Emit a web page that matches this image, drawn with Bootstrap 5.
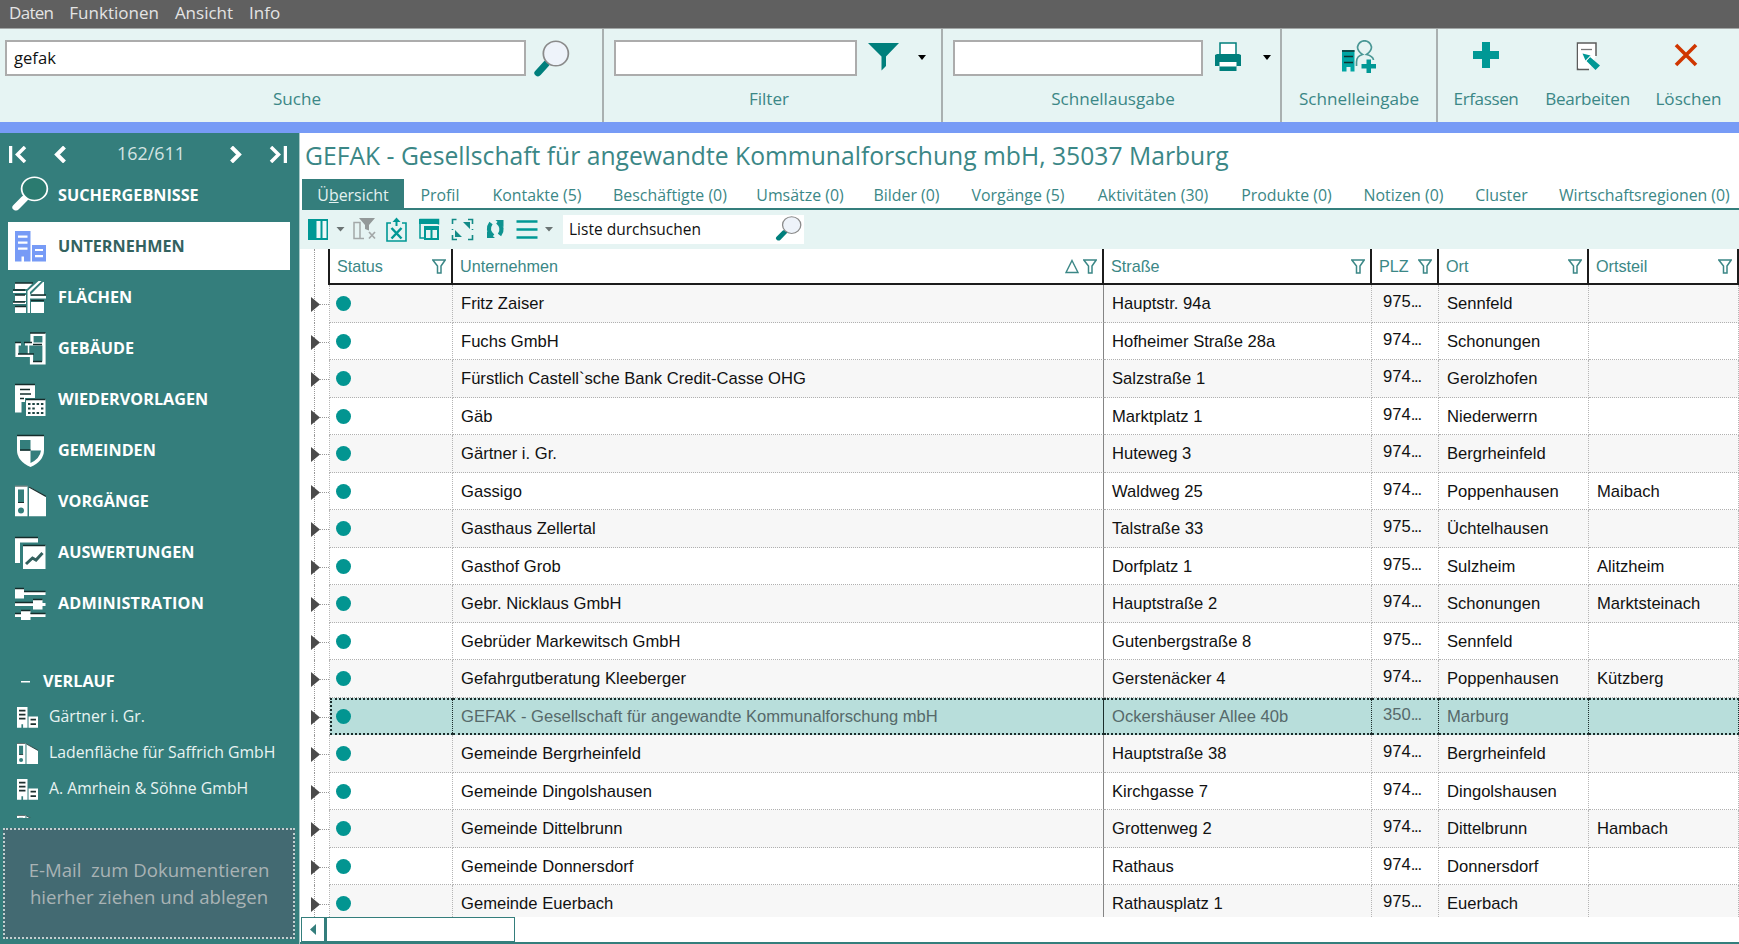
<!DOCTYPE html>
<html lang="de">
<head>
<meta charset="utf-8">
<meta name="viewport" content="width=device-width, initial-scale=1">
<title>GEFAK</title>
<link href="https://cdn.jsdelivr.net/npm/bootstrap@5.3.0/dist/css/bootstrap.min.css" rel="stylesheet">
<style>
:root{--teal:#347e7c;--ink:#3b8786;--mint:#e6f4f3;--acc:#009895;--blue:#779bf6}
body{font-family:"Open Sans","Noto Sans",sans-serif;height:944px;overflow:hidden;background:#fff;line-height:1}
svg{display:block;flex:none}
.menubar{height:29px;background:#606060;border-bottom:1px solid #a2a6a6;color:#e4e4e4;font-size:17px;padding-left:9px;gap:16px}
.menubar span{padding-bottom:3px}
.menubar span:first-child{letter-spacing:-.7px}
.ribbon{height:93px;background:var(--mint);color:var(--ink);font-size:17.1px}
.ribbon-group{padding-top:11px;border-right:2px solid #a9b0b0}
.ribbon-group.last{border:0}
.ribbon-line{height:37px}
.ribbon-label{margin-top:11px;text-align:center;line-height:22px;white-space:nowrap}
.field{height:36px;background:#fff;border:2px solid #acacac;border-radius:0;color:#111;font-size:16.6px;padding:0 0 0 7px;line-height:31px}
.stripe{height:11px;background:var(--blue)}
.side{width:300px;height:811px;background:var(--teal);color:#fff;border-right:1px solid #a9c9c8}
.pager{height:42px;font-size:17.9px;color:#d4e4e3;padding:0 12px 0 9px}
.side-item{height:48px;margin:0 9px 3px 8px;padding-left:5px;font-weight:700;font-size:16.2px}
.side-item svg{margin-right:12px}
.side-item.active{background:#fff;color:#33625f;--hole:#fff}
.side-item.active svg{color:var(--blue)}
.history{height:119px;overflow:hidden}
.history>div{height:36px;padding-left:17px;font-size:15.8px;color:#e8f3f2;white-space:nowrap}
.history svg{margin-right:11px}
.drop{height:111px;margin:10px 4px 0 3px;background:#436a72;border:2px dotted #c3cfd0;color:#a9b3b5;font-size:18.6px;line-height:26.5px;text-align:center;white-space:pre}
.main{width:1439px;height:811px}
.title-line{height:46px;font-size:24.7px;color:var(--ink);padding:0 0 0 5px;white-space:nowrap}
.tabs{margin-left:2px;height:31px;display:grid;grid-template-columns:102px 72px 122px 144px 116px 97px 126px 144px 123px 111px 85px 195px;border-bottom:2px solid var(--teal);font-size:15.9px;color:var(--ink);overflow:hidden}
.tabs>div{text-align:center;line-height:32px;white-space:nowrap}
.tabs>.active{background:var(--teal);color:#e3f1f0}
.tabs>:last-child{text-align:left;padding-left:15px;letter-spacing:-.05px}
.tools{height:39px;background:var(--mint);color:var(--acc);padding-left:6px}
.listsearch{width:241px;height:29px;background:#fff;color:#111;font-size:15.5px;padding-left:6px}
.grid{height:668px;overflow:hidden;font-family:"Liberation Sans",Arial,sans-serif;font-size:16.6px;color:#111;background:#fff}
.grid-row{display:grid;grid-template-columns:30px 123px 651px 268px 67px 150px 150px;height:37.5px}
.grid-row.head{height:36px;color:var(--ink);font-size:16.2px}
.head>div{border-right:2px solid #1c1c1c;border-bottom:2px solid #1c1c1c;display:flex;align-items:center;justify-content:space-between;padding:1px 5px 0 7px}
.head>.tree{border-bottom:0}
.cell{border-right:1px dotted #b5b5b5;border-bottom:1px dotted #b0b0b0;padding:0 0 0 8px;line-height:37px;white-space:nowrap;overflow:hidden}
.odd .cell{background:#f7f7f7}
.cell.solid{border-right:1px solid #858585}
.cell.plz{line-height:33px;padding-left:11px}
.tree{position:relative;border-right:1px dotted #b5b5b5}
.tree::before{content:"";position:absolute;left:14px;top:0;bottom:0;border-left:1px dotted #999}
.data .tree::after{content:"";position:absolute;left:18px;right:0;top:19px;border-top:1px dotted #999}
.tree svg{position:absolute;left:10px;top:12px;z-index:1}
.dot{width:15px;height:15px;border-radius:50%;background:#029591;margin:11px 0 0 -2px}
.picked .cell{background:#b8dedb;color:#56696a;border-top:2px dotted #1a2c2b;border-bottom:2px dotted #1a2c2b;border-right-color:#1a2c2b;line-height:33px}
.picked .cell.plz{line-height:29px}
.picked .cell.first{border-left:2px dotted #1a2c2b;padding-left:6px}
.picked .dot{margin-top:9px}
.hscroll{height:27px;border-bottom:2px solid var(--teal);padding-left:1px}
.hscroll .arrow{width:24px;height:25px;border:1px solid var(--teal)}
.hscroll .thumb{width:190px;height:25px;border:1px solid var(--teal);border-left-width:2px}
</style>
</head>
<body>
<svg width="0" height="0" class="position-absolute">
<defs>
<symbol id="i-firm" viewBox="0 0 31 31"><path fill="currentColor" d="M0 0h15.500v30.500H9v-5H6.500v5H0zM17 14h14v16.500H17z"/><path style="fill:var(--hole,#347e7c)" d="M3 4.500h9.500v2.200H3zM3 10.500h9.500v2.200H3zM3 16.500h9.500v2.200H3zM20 18h8v2H20zM20 24h8v2.200H20z"/></symbol>
<symbol id="i-firm-dark" viewBox="0 0 31 31"><path fill="#fff" d="M0 0h15.500v30.500H9v-5H6.500v5H0zM17 14h14v16.500H17z"/><path fill="#1d302f" d="M3 4h9.500v2.500H3zM3 10h9.500v2.500H3zM3 16h9.500v2.500H3zM20 17.500h8V20H20zM20 24h8v2.500H20z"/></symbol>
<symbol id="i-file" viewBox="0 0 31 31"><path fill="#fff" d="M0 0h12.500v31H0zM14 1l17 10v20H14z"/><path fill="#347e7c" d="M3 4h6v13H3z"/><circle cx="6" cy="25" r="3" fill="#347e7c"/><path d="M0 .5h12.500M14 1.500l17 9.500M3 17h6" stroke="#1d302f" stroke-width="1.200"/></symbol>
<symbol id="i-lens" viewBox="0 0 34 40"><path d="M12 24L4.500 33" stroke="var(--h,#007f7c)" stroke-width="6.500" stroke-linecap="round"/><ellipse cx="21" cy="13.500" rx="11.500" ry="12.300" fill="var(--g,#eef3fa)" stroke="var(--r,#8a8a8a)" stroke-width="1.600"/></symbol>
<symbol id="i-fun" viewBox="0 0 14 15"><path d="M.8 1h12.400L9 7v7H5.500V7z" fill="none" stroke="#3b8786" stroke-width="1.500"/></symbol>
</defs>
</svg>

<nav class="menubar d-flex align-items-center"><span>Daten</span><span>Funktionen</span><span>Ansicht</span><span>Info</span></nav>

<header class="ribbon d-flex">
  <div class="ribbon-group" style="width:604px">
    <div class="ribbon-line d-flex" style="padding-left:5px"><div class="field" style="width:521px">gefak</div>
      <svg width="37" height="40" viewBox="0 0 34 40" preserveAspectRatio="none" style="margin-left:7px"><use href="#i-lens"/></svg></div>
    <div class="ribbon-label" style="padding-right:8px">Suche</div>
  </div>
  <div class="ribbon-group" style="width:339px">
    <div class="ribbon-line d-flex" style="padding-left:10px"><div class="field" style="width:243px"></div>
      <svg width="31" height="28" viewBox="0 0 31 28" style="margin:3px 0 0 11px"><path fill="#007f7c" d="M0 0h31L18 13.500V23l-4.500 4.500v-14z"/></svg>
      <svg width="9" height="6" viewBox="0 0 9 6" style="margin:15px 0 0 19px"><path d="M0 0h8L4 5z"/></svg></div>
    <div class="ribbon-label" style="padding-right:7px">Filter</div>
  </div>
  <div class="ribbon-group" style="width:339px">
    <div class="ribbon-line d-flex" style="padding-left:10px"><div class="field" style="width:250px"></div>
      <svg width="26" height="29" viewBox="0 0 26 29" style="margin:2px 0 0 12px"><path d="M5 1h16v12H5z" fill="#fff" stroke="#007f7c" stroke-width="1.500"/><path fill="#007f7c" d="M0 13l2-1h22l2 1v11h-4.500v5h-17v-5H0z"/><path fill="#fff" d="M4.500 20h17v4.500h-17z"/></svg>
      <svg width="9" height="6" viewBox="0 0 9 6" style="margin:15px 0 0 22px"><path d="M0 0h8L4 5z"/></svg></div>
    <div class="ribbon-label" style="padding-left:3px">Schnellausgabe</div>
  </div>
  <div class="ribbon-group" style="width:156px">
    <div class="ribbon-line d-flex justify-content-center">
      <svg width="34" height="34" viewBox="0 0 34 34"><path fill="#00a5a3" d="M0 10h12.500v21.500H8.500V27H4.500v4.500H0z"/><path d="M0 11h12.500M2 16.500h9M2 22.500h9" stroke="#12312f" stroke-width="1.300"/><path d="M14.500 26v-4q0-6 6-7.500Q15.500 11 15.500 7 17 .8 22.500 .8T29.500 7Q29.500 11 24.500 14.500 31 16 31.500 20" fill="none" stroke="#4a9795" stroke-width="1.700"/><path fill="#009895" d="M24.500 19.500h4.500v4.500h5v4.500h-5v4.500h-4.500v-4.500h-5V24h5z"/></svg></div>
    <div class="ribbon-label">Schnelleingabe</div>
  </div>
  <div class="ribbon-group last" style="width:96px">
    <div class="ribbon-line d-flex justify-content-center"><svg width="26" height="26" viewBox="0 0 26 26" style="margin-top:2px"><path fill="#009895" d="M9 0h8v9h9v8h-9v9H9v-9H0V9h9z"/></svg></div>
    <div class="ribbon-label" style="letter-spacing:-.4px">Erfassen</div>
  </div>
  <div class="ribbon-group last" style="width:107px">
    <div class="ribbon-line d-flex justify-content-center"><svg width="25" height="29" viewBox="0 0 25 29" style="margin:2px 0 0 2px"><path d="M13 27.500H1.500V1h18.500v13" fill="#fff" stroke="#5c5c5c" stroke-width="1.500"/><path fill="#fff" d="M2 2h17v12l-5 12H2z"/><path d="M5 7.500h11" stroke="#777" stroke-width="1.300"/><path fill="#009895" d="M6.500 11.500l8 2-5 5zM14 15l10 8.500-4.500 4.500-9-9z"/><path d="M15 13.500l-5 5.500" stroke="#e6f4f3"/></svg></div>
    <div class="ribbon-label" style="letter-spacing:-.3px">Bearbeiten</div>
  </div>
  <div class="ribbon-group last" style="width:95px">
    <div class="ribbon-line d-flex justify-content-center"><svg width="24" height="24" viewBox="0 0 24 24" style="margin:3px 6px 0 0"><path d="M2 2l20 20M22 2L2 22" stroke="#cf3600" stroke-width="3.600"/></svg></div>
    <div class="ribbon-label">Löschen</div>
  </div>
</header>
<div class="stripe"></div>

<div class="d-flex">
<aside class="side">
  <div class="pager d-flex align-items-center">
    <svg width="18" height="17" viewBox="0 0 18 17"><path d="M1.500 0v17M16 1L8.500 8.500 16 16" fill="none" stroke="#fff" stroke-width="3.500"/></svg>
    <svg width="12" height="17" viewBox="0 0 12 17" style="margin-left:27px"><path d="M10.500 1L3 8.500l7.500 7.500" fill="none" stroke="#fff" stroke-width="4"/></svg>
    <span style="margin:0 0 1px 51px">162/611</span>
    <svg width="12" height="17" viewBox="0 0 12 17" class="ms-auto"><path d="M1.500 1L9 8.500 1.500 16" fill="none" stroke="#fff" stroke-width="4"/></svg>
    <svg width="18" height="17" viewBox="0 0 18 17" style="margin-left:27px"><path d="M16.500 0v17M2 1l7.500 7.500L2 16" fill="none" stroke="#fff" stroke-width="3.500"/></svg>
  </div>
  <div style="margin-top:-4px">
  <div class="side-item d-flex align-items-center" style="padding-left:3px;--h:#fff;--r:#fff;--g:#2b7b70"><svg width="38" height="38" viewBox="0 0 34 40" preserveAspectRatio="none" style="margin-right:9px"><use href="#i-lens"/></svg>SUCHERGEBNISSE</div>
  <div class="side-item active d-flex align-items-center" style="padding-left:7px"><svg width="31" height="31"><use href="#i-firm"/></svg>UNTERNEHMEN</div>
  <div class="side-item d-flex align-items-center"><svg width="33" height="33" viewBox="0 0 33 33"><path fill="#fff" d="M2 2h18l-6 6H2zM23 8l7-7h1v13H17zM0 10h13v2H0zM2 14h11v6H2zM0 21h13v2H0zM2 26h11v6H2zM18 21h13v11H18zM14.500 10l11-10h3L17 11v21h-2.500z"/><path fill="#fff" d="M16 14.500h17v3H16z"/><path d="M2 2h18M0 9h12M18 14h15M18 19.500h13M2 14h10M0 21h12M2 25.500h11" stroke="#152c2b" stroke-width="1.300"/></svg>FLÄCHEN</div>
  <div class="side-item d-flex align-items-center"><svg width="33" height="33" viewBox="0 0 33 33"><path d="M8 12H4v11.500h14.500V31H31V2.500H19V12h-7M19 12h12" fill="none" stroke="#fff" stroke-width="3.200"/><path d="M15.500 12v11" stroke="#fff" stroke-width="1.500"/><path d="M17 1h15.500M2 10.500h6M11 10.500h8M20 12.500h9M5 22h16M20 29.500h9" stroke="#152c2b" stroke-width="1.300"/></svg>GEBÄUDE</div>
  <div class="side-item d-flex align-items-center"><svg width="33" height="33" viewBox="0 0 33 33"><path fill="#fff" d="M2 1h20v14H12v4h-3.500v10.500H2zM13 16h19.500v17H13z"/><path d="M2 1.500h20M7 6.500h10M7 11h11M7 15.500h4M13 16.500h19.500" stroke="#152c2b" stroke-width="1.700"/><path d="M15 21h16M15 25.500h16M15 30h16" stroke="#1d4341" stroke-width="2" stroke-dasharray="2.500 1.800"/><path fill="#fff" d="M23 24h5v3h-5z"/></svg>WIEDERVORLAGEN</div>
  <div class="side-item d-flex align-items-center"><svg width="33" height="33" viewBox="0 0 33 33"><path fill="#fff" d="M4 2h27v14q0 11-13.500 17Q4 27 4 16z"/><path fill="#347e7c" d="M7 6h10.500v10.500H7zM17.500 16.500H28q-1 8-10.500 12.500z"/><path d="M4 1.500h27M7 16h10.500" stroke="#152c2b" stroke-width="1.300"/></svg>GEMEINDEN</div>
  <div class="side-item d-flex align-items-center" style="padding-left:7px"><svg width="31" height="32" viewBox="0 0 31 31"><use href="#i-file"/></svg>VORGÄNGE</div>
  <div class="side-item d-flex align-items-center"><svg width="33" height="33" viewBox="0 0 33 33"><path fill="#fff" d="M2 1h23v5.500H7V27H2zM10 9h22.500v24H10z"/><path d="M2 1.500h23M10 9.500h22.500" stroke="#152c2b" stroke-width="1.500"/><path d="M13 28l6.500-6 3.500 2 6.500-7" fill="none" stroke="#34605e" stroke-width="3"/></svg>AUSWERTUNGEN</div>
  <div class="side-item d-flex align-items-center" style="letter-spacing:.2px"><svg width="33" height="33" viewBox="0 0 33 33"><path fill="#fff" d="M2 5h30.500v3H2zM2 16h30.500v3H2zM2 27h30.500v3H2zM2 1.500h9v10H2zM20 12.500h9.500v10H20zM8 23.500h9.500v10H8z"/><path d="M2 1.500h9M11 4.500h21.500M2 15.500h18M20 12.500h9.500M2 26.500h6M8 23.500h9.500M17.500 26.500h15" stroke="#152c2b" stroke-width="1.300"/></svg>ADMINISTRATION</div>
  </div>
  <div class="d-flex align-items-center fw-bold" style="height:35px;margin-top:37px;padding-left:21px;font-size:16.2px"><svg width="9" height="2" style="margin-right:13px"><path fill="#fff" d="M0 0h9v1.500H0z"/></svg>VERLAUF</div>
  <div class="history">
    <div class="d-flex align-items-center"><svg width="21" height="21"><use href="#i-firm-dark"/></svg>Gärtner i. Gr.</div>
    <div class="d-flex align-items-center"><svg width="21" height="21"><use href="#i-file"/></svg>Ladenfläche für Saffrich GmbH</div>
    <div class="d-flex align-items-center"><svg width="21" height="21"><use href="#i-firm-dark"/></svg>A. Amrhein &amp; Söhne GmbH</div>
    <div class="d-flex align-items-center"><svg width="21" height="21"><use href="#i-file"/></svg>Gärtner Sauer Gießen</div>
  </div>
  <div class="drop d-flex align-items-center justify-content-center">E-Mail  zum Dokumentieren
hierher ziehen und ablegen</div>
</aside>

<main class="main">
  <div class="title-line d-flex align-items-center">GEFAK - Gesellschaft für angewandte Kommunalforschung mbH, 35037 Marburg</div>
  <div class="tabs"><div class="active">Ü<u>b</u>ersicht</div><div>Profil</div><div>Kontakte (5)</div><div>Beschäftigte (0)</div><div>Umsätze (0)</div><div>Bilder (0)</div><div>Vorgänge (5)</div><div>Aktivitäten (30)</div><div>Produkte (0)</div><div>Notizen (0)</div><div>Cluster</div><div>Wirtschaftsregionen (0)</div></div>
  <div class="tools d-flex align-items-center">
    <svg width="258" height="30" viewBox="306 215 258 30">
      <path fill="#009895" d="M308 219h20v21h-20z"/><path fill="#eef8f8" d="M316.500 221h4v17h-4zM322.500 221h4v17h-4z"/>
      <path fill="#6b7474" d="M336.500 227h8l-4 4.500zM545 227h8l-4 4.500z"/>
      <path d="M354 238.500v-16h6v16zM364 238.500h-4v-16" fill="none" stroke="#a3a8a8" stroke-width="1.500"/><path fill="#939999" d="M359 218h16l-6 7v5.500l-4-1.500v-4z"/><path d="M369 232l6 6.500m0-6.500l-6 6.500" stroke="#a3a8a8" stroke-width="1.700"/>
      <path d="M391 223h-4v18h19v-18h-4" fill="none" stroke="#009895" stroke-width="1.600"/><path d="M396.500 226v-6" stroke="#009895" stroke-width="2"/><path d="M391.500 228l10 10.500m0-10.500l-10 10.500" stroke="#009895" stroke-width="2.500"/><path fill="#009895" d="M392.500 222l4-4.500 4 4.500z"/>
      <path fill="#009895" d="M419 219h20v5h-20zM424 226h15v14h-15z"/><path d="M420 222v16h4M419.500 219.500h19v5" fill="none" stroke="#009895" stroke-width="1.500"/><path fill="#e6f4f3" d="M426 230h4.500v8H426zM432.500 230h4.500v8h-4.500z"/>
      <path d="M452.500 224v-4.500h4M468 219.500h4.500v4.500M472.500 235v4.500H468M457 239.500h-4.500V235M452.500 229v1M472.500 229v1" fill="none" stroke="#128a87" stroke-width="1.600"/><path fill="#128a87" d="M463 222h7v7zM455 230v7h7z"/>
      <path d="M493 236q-7-6-2-13M497.500 222q7 6 2 13" fill="none" stroke="#0d9390" stroke-width="4"/><path fill="#0d9390" d="M487 231v7h8zM503.500 227v-7h-8z"/>
      <path d="M516.500 221.500h21M516.500 229.500h21M516.500 237.500h21" stroke="#009895" stroke-width="2.700"/>
    </svg>
    <div class="listsearch d-flex align-items-center justify-content-between" style="margin-left:-1px">Liste durchsuchen<svg width="27" height="27" viewBox="0 0 34 40" preserveAspectRatio="none" style="margin-right:2px"><use href="#i-lens"/></svg></div>
  </div>
  <div class="grid" id="grid">
    <div class="grid-row head"><div class="tree"></div>
      <div>Status<svg width="14" height="15"><use href="#i-fun"/></svg></div>
      <div>Unternehmen<span class="d-flex gap-1"><svg width="14" height="15" viewBox="0 0 14 15"><path d="M7 1.500L13 13.500H1z" fill="none" stroke="#3b8786" stroke-width="1.400"/></svg><svg width="14" height="15"><use href="#i-fun"/></svg></span></div>
      <div>Straße<svg width="14" height="15"><use href="#i-fun"/></svg></div>
      <div>PLZ<svg width="14" height="15"><use href="#i-fun"/></svg></div>
      <div>Ort<svg width="14" height="15"><use href="#i-fun"/></svg></div>
      <div>Ortsteil<svg width="14" height="15"><use href="#i-fun"/></svg></div>
    </div>
  </div>
  <div class="hscroll d-flex"><div class="arrow d-flex align-items-center justify-content-center"><svg width="6" height="11"><path fill="#347e7c" d="M6 0v11L0 5.500z"/></svg></div><div class="thumb"></div></div>
</main>
</div>

<script src="https://cdn.jsdelivr.net/npm/bootstrap@5.3.0/dist/js/bootstrap.bundle.min.js"></script>
<script>
const rows = [
 ['Fritz Zaiser','Hauptstr. 94a','975...','Sennfeld',''],
 ['Fuchs GmbH','Hofheimer Straße 28a','974...','Schonungen',''],
 ['Fürstlich Castell`sche Bank Credit-Casse OHG','Salzstraße 1','974...','Gerolzhofen',''],
 ['Gäb','Marktplatz 1','974...','Niederwerrn',''],
 ['Gärtner i. Gr.','Huteweg 3','974...','Bergrheinfeld',''],
 ['Gassigo','Waldweg 25','974...','Poppenhausen','Maibach'],
 ['Gasthaus Zellertal','Talstraße 33','975...','Üchtelhausen',''],
 ['Gasthof Grob','Dorfplatz 1','975...','Sulzheim','Alitzheim'],
 ['Gebr. Nicklaus GmbH','Hauptstraße 2','974...','Schonungen','Marktsteinach'],
 ['Gebrüder Markewitsch GmbH','Gutenbergstraße 8','975...','Sennfeld',''],
 ['Gefahrgutberatung Kleeberger','Gerstenäcker 4','974...','Poppenhausen','Kützberg'],
 ['GEFAK - Gesellschaft für angewandte Kommunalforschung mbH','Ockershäuser Allee 40b','350...','Marburg',''],
 ['Gemeinde Bergrheinfeld','Hauptstraße 38','974...','Bergrheinfeld',''],
 ['Gemeinde Dingolshausen','Kirchgasse 7','974...','Dingolshausen',''],
 ['Gemeinde Dittelbrunn','Grottenweg 2','974...','Dittelbrunn','Hambach'],
 ['Gemeinde Donnersdorf','Rathaus','974...','Donnersdorf',''],
 ['Gemeinde Euerbach','Rathausplatz 1','975...','Euerbach','']
];
const picked = 11;
document.getElementById('grid').insertAdjacentHTML('beforeend', rows.map((r, i) => `
<div class="grid-row data ${i % 2 ? '' : 'odd'} ${i === picked ? 'picked' : ''}">
  <div class="tree"><svg width="10" height="15"><path fill="#4a4a4a" d="M1 0l9 7.500L1 15z"/></svg></div>
  <div class="cell first"><div class="dot"></div></div>
  <div class="cell solid">${r[0]}</div><div class="cell">${r[1]}</div>
  <div class="cell plz">${r[2].replace('...', '<span style="letter-spacing:-1.2px">...</span>')}</div><div class="cell">${r[3]}</div><div class="cell">${r[4]}</div>
</div>`).join(''));
</script>
</body>
</html>
